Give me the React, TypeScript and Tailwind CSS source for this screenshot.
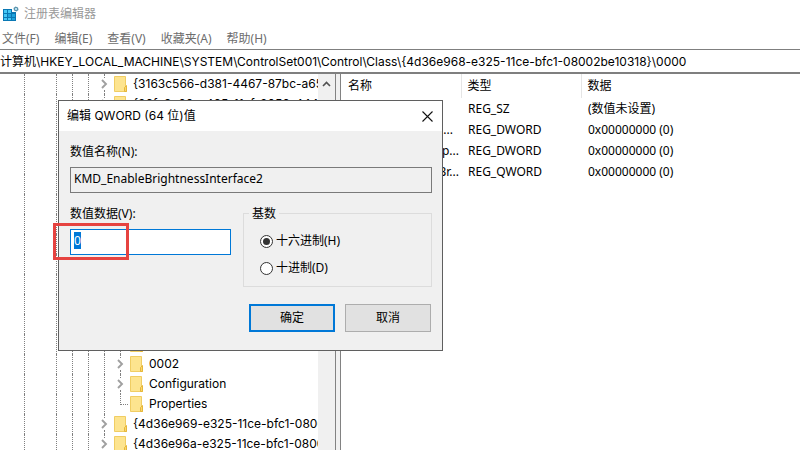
import { useEffect, useRef } from "react";

type Guide = "none" | "line" | "corner";

type TreeNode = {
  name: string;
  depth: number;
  leaf?: boolean;
};

const MENUS = ["文件(F)", "编辑(E)", "查看(V)", "收藏夹(A)", "帮助(H)"];

const KEY_PATH =
  "计算机\\HKEY_LOCAL_MACHINE\\SYSTEM\\ControlSet001\\Control\\Class\\{4d36e968-e325-11ce-bfc1-08002be10318}\\0000";

const TREE: TreeNode[] = [
  { name: "{3163c566-d381-4467-87bc-a65a18d5b648}", depth: 0 },
  { name: "{36fc9e60-c465-11cf-8056-444553540000}", depth: 0 },
  { name: "{43675d81-502a-4a82-9f84-b75f418c5dea}", depth: 0 },
  { name: "{4658ee7e-f050-11d1-b6bd-00c04fa372a7}", depth: 0 },
  { name: "{48721b56-6795-11d2-b1a8-0080c72e74a2}", depth: 0 },
  { name: "{49ce6ac8-6f86-11d2-b1e5-0080c72e74a2}", depth: 0 },
  { name: "{4d36e964-e325-11ce-bfc1-08002be10318}", depth: 0 },
  { name: "{4d36e965-e325-11ce-bfc1-08002be10318}", depth: 0 },
  { name: "{4d36e966-e325-11ce-bfc1-08002be10318}", depth: 0 },
  { name: "{4d36e967-e325-11ce-bfc1-08002be10318}", depth: 0 },
  { name: "{4d36e968-e325-11ce-bfc1-08002be10318}", depth: 0 },
  { name: "0000", depth: 1 },
  { name: "0001", depth: 1 },
  { name: "0001", depth: 1 },
  { name: "0002", depth: 1 },
  { name: "Configuration", depth: 1 },
  { name: "Properties", depth: 1, leaf: true },
  { name: "{4d36e969-e325-11ce-bfc1-08002be10318}", depth: 0 },
  { name: "{4d36e96a-e325-11ce-bfc1-08002be10318}", depth: 0 },
];

const VALUES = [
  { name: "(默认)", type: "REG_SZ", data: "(数值未设置)", pad: "pr-12" },
  { name: "DisplayPowerUi...", type: "REG_DWORD", data: "0x00000000 (0)", pad: "pr-2" },
  { name: "KMD_EnableOp...", type: "REG_DWORD", data: "0x00000000 (0)", pad: "pr-0.5" },
  { name: "KMD_EnableBr...", type: "REG_QWORD", data: "0x00000000 (0)", pad: "pr-0.5" },
];

const BASE_GUIDES: Guide[] = ["none", "line", "none", "line", "line", "line"];

function AppIcon() {
  return (
    <svg width="16" height="16" viewBox="0 0 16 16" aria-hidden="true">
      <path d="M0 3h9v3h4v9H0z" fill="#0a78b4" />
      <path d="M1 4h3v3H1zM5 4h3v3H5zM1 8h3v3H1zM1 12h3v2H1zM5 12h3v2H5z" fill="#45c8f5" />
      <path d="M5 8h3v3H5zM9 8h3v3H9zM9 12h3v2H9z" fill="#1fa3dc" />
      <path d="M12.5 0.5l2.5 1 0.5 2.5-2 1.5-2.5-1-0.5-2.5z" fill="#5a93ad" />
      <path d="M12 2h2v2h-2z" fill="#b5ddec" />
    </svg>
  );
}

function Chevron() {
  return (
    <svg width="7" height="10" viewBox="0 0 7 10" fill="none" stroke="#a0a0a0" strokeWidth="1.9" aria-hidden="true">
      <path d="M1 1l4 4-4 4" />
    </svg>
  );
}

function Folder() {
  return (
    <svg width="14" height="16" viewBox="0 0 14 16" className="shrink-0" aria-hidden="true">
      <path d="M0.5 0.5h11v10h1v5h-12z" fill="#fde48f" stroke="#f0cd63" />
      <path d="M10.5 15.5v-4l2-2v6z" fill="#fbd768" stroke="#e5b63c" />
    </svg>
  );
}

function GuideCell({ kind }: { kind: Guide }) {
  return (
    <span className="flex h-5 w-4 shrink-0 justify-end">
      {kind === "line" && <span className="w-2 border-l border-dotted border-[#808080]" />}
      {kind === "corner" && (
        <span className="h-[11px] w-2 border-b border-l border-dotted border-[#808080]" />
      )}
    </span>
  );
}

function TreeRow({ node }: { node: TreeNode }) {
  const guides: Guide[] = node.depth === 1 ? [...BASE_GUIDES, "line"] : BASE_GUIDES;
  return (
    <li className="flex h-5 items-center">
      {guides.map((kind, i) => (
        <GuideCell key={i} kind={kind} />
      ))}
      {node.leaf ? (
        <GuideCell kind="corner" />
      ) : (
        <span className="flex h-5 w-4 shrink-0 flex-col items-center">
          <span className="h-1 border-l border-dotted border-[#808080]" />
          <span className="flex h-3 items-center">
            <Chevron />
          </span>
          <span className="h-1 border-l border-dotted border-[#808080]" />
        </span>
      )}
      <span className="flex min-w-0 items-center gap-[5px] pl-0.5">
        <Folder />
        <span className="min-w-0 overflow-hidden whitespace-nowrap">{node.name}</span>
      </span>
    </li>
  );
}

function QwordDialog() {
  const dataRef = useRef<HTMLInputElement>(null);

  useEffect(() => {
    dataRef.current?.focus();
    dataRef.current?.select();
  }, []);

  return (
    <div
      role="dialog"
      aria-labelledby="dialog-title"
      className="absolute left-[58px] top-[100px] w-[385px] border border-[#5f5f5f] bg-[#f0f0f0]"
    >
      <div className="flex h-[30px] items-center justify-between bg-white pl-2 pr-[9px]">
        <h2 id="dialog-title" className="font-['Inter','Noto_Sans_CJK_SC',sans-serif]">
          编辑 QWORD (64 位)值
        </h2>
        <button type="button" aria-label="关闭">
          <svg width="11" height="11" viewBox="0 0 11 11" stroke="#111" strokeWidth="1.1" aria-hidden="true">
            <path d="M0.5 0.5l10 10M10.5 0.5l-10 10" />
          </svg>
        </button>
      </div>
      <form className="pb-[18px] pl-[11px] pr-2.5 pt-3" onSubmit={(e) => e.preventDefault()}>
        <label htmlFor="value-name" className="block h-[18px] leading-[18px]">
          数值名称(N):
        </label>
        <input
          id="value-name"
          readOnly
          value="KMD_EnableBrightnessInterface2"
          className="mt-[6px] block h-[26px] w-full border border-[#7a7a7a] bg-[#f0f0f0] pb-1 pl-[3px] outline-none"
        />
        <div className="mt-3 flex gap-3">
          <div className="w-[161px]">
            <label htmlFor="value-data" className="block h-[18px] leading-[18px]">
              数值数据(V):
            </label>
            <div className="relative mt-[6px]">
              <input
                id="value-data"
                ref={dataRef}
                defaultValue="0"
                className="block h-[26px] w-full border border-[#0078d7] bg-white pb-1 pl-[3px] outline-none selection:bg-[#0078d7] selection:text-white"
              />
              <span className="pointer-events-none absolute -left-[17px] -top-[6px] h-[37px] w-[76px] border-3 border-[#e64340]" />
            </div>
          </div>
          <fieldset className="relative mt-2 h-[74px] flex-1 border border-[#dcdcdc] pl-4 pt-[18px]">
            <legend className="absolute -top-[9px] left-[5px] bg-[#f0f0f0] px-[3px] leading-[18px]">基数</legend>
            <div className="flex flex-col gap-[9px]">
              {["十六进制(H)", "十进制(D)"].map((label, i) => (
                <label key={label} className="flex h-[18px] items-center gap-[3px]">
                  <input
                    type="radio"
                    name="base"
                    defaultChecked={i === 0}
                    className="grid size-[13px] appearance-none place-content-center rounded-full border border-[#333] bg-white before:size-[7px] before:rounded-full checked:before:bg-[#333]"
                  />
                  {label}
                </label>
              ))}
            </div>
          </fieldset>
        </div>
        <div className="mt-[17px] flex justify-end gap-2.5 pr-px">
          <button type="submit" className="h-7 w-[86px] border-2 border-[#0078d7] bg-[#e1e1e1]">
            确定
          </button>
          <button type="button" className="h-7 w-[86px] border border-[#adadad] bg-[#e1e1e1]">
            取消
          </button>
        </div>
      </form>
    </div>
  );
}

export default function App() {
  return (
    <div className="relative flex h-screen flex-col overflow-hidden bg-white font-['Noto_Sans','Noto_Sans_CJK_SC',sans-serif] text-xs text-black">
      <header className="flex h-7 shrink-0 items-center gap-[5px] pl-[3px] text-[#999]">
        <AppIcon />
        <h1>注册表编辑器</h1>
      </header>
      <nav className="flex h-[21px] shrink-0 items-center gap-[15px] pl-0.5 text-[#6d6d6d]">
        {MENUS.map((menu) => (
          <button key={menu} type="button">
            {menu}
          </button>
        ))}
      </nav>
      <input
        aria-label="注册表路径"
        readOnly
        value={KEY_PATH}
        className="block h-[25px] w-full shrink-0 border-b-2 border-t border-[#7f7f7f] bg-white pb-0.5 font-['Inter','Noto_Sans_CJK_SC',sans-serif] outline-none"
      />
      <main className="flex min-h-0 flex-1">
        <ul className="w-[318px] shrink-0 overflow-hidden font-['Inter','Noto_Sans_CJK_SC',sans-serif]">
          {TREE.map((node, i) => (
            <TreeRow key={i} node={node} />
          ))}
        </ul>
        <div className="flex w-[17px] shrink-0 justify-center bg-[#f0f0f0] pt-[7px]">
          <svg width="9" height="6" viewBox="0 0 9 6" fill="none" stroke="#505050" strokeWidth="1.6" aria-hidden="true">
            <path d="M1 5l3.5-3.5L8 5" />
          </svg>
        </div>
        <div className="w-[6px] shrink-0 border-x border-[#828282] bg-[#f0f0f0]" />
        <div className="min-w-0 flex-1">
          <table className="w-full table-fixed border-collapse text-left">
            <thead>
              <tr className="h-6">
                <th className="w-[120px] border-r border-[#e5e5e5] p-0 pl-[7px] font-normal">名称</th>
                <th className="w-[120px] border-r border-[#e5e5e5] p-0 pl-[6px] font-normal">类型</th>
                <th className="p-0 pl-[6px] font-normal">数据</th>
              </tr>
            </thead>
            <tbody>
              {VALUES.map((v) => (
                <tr key={v.name} className="h-[21px]">
                  <td className={`p-0 text-right ${v.pad}`}>{v.name}</td>
                  <td className="p-0 pl-[7px]">{v.type}</td>
                  <td className="p-0 pl-[7px]">{v.data}</td>
                </tr>
              ))}
            </tbody>
          </table>
        </div>
      </main>
      <QwordDialog />
    </div>
  );
}
